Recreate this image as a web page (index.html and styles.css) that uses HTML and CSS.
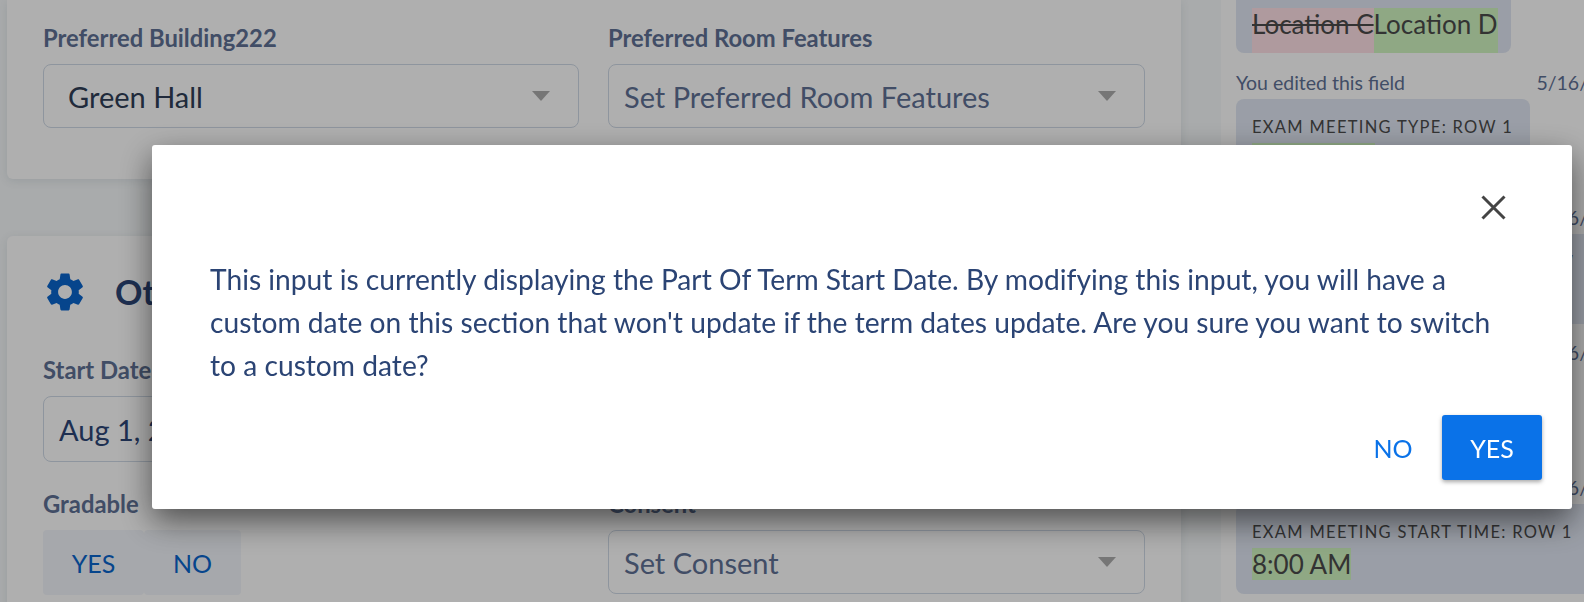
FILE: index.html
```html
<!DOCTYPE html>
<html lang="en">
<head>
  <meta name="viewport" content="width=device-width, initial-scale=1">
  <link rel="stylesheet" href="styles.css">
</head>
<body>
  <div class="page">
    <main class="main-col">
      <section class="card card-first">
        <div class="form-row">
          <div class="field">
            <div class="field-label">Preferred Building222</div>
            <div class="select select-filled">Green Hall<span class="caret"></span></div>
          </div>
          <div class="field">
            <div class="field-label">Preferred Room Features</div>
            <div class="select">Set Preferred Room Features<span class="caret"></span></div>
          </div>
        </div>
      </section>

      <section class="card card-second">
        <div class="card-title">
          <svg class="gear" viewBox="0 0 24 24"><path d="M19.14 12.94c.04-.3.06-.61.06-.94 0-.32-.02-.64-.07-.94l2.03-1.58c.18-.14.23-.41.12-.61l-1.92-3.32c-.12-.22-.37-.29-.59-.22l-2.39.96c-.5-.38-1.03-.7-1.62-.94l-.36-2.54c-.04-.24-.24-.41-.48-.41h-3.84c-.24 0-.43.17-.47.41l-.36 2.54c-.59.24-1.13.57-1.62.94l-2.39-.96c-.22-.08-.47 0-.59.22L2.74 8.87c-.12.21-.08.47.12.61l2.03 1.58c-.05.3-.09.63-.09.94s.02.64.07.94l-2.03 1.58c-.18.14-.23.41-.12.61l1.92 3.32c.12.22.37.29.59.22l2.39-.96c.5.38 1.03.7 1.62.94l.36 2.54c.05.24.24.41.48.41h3.84c.24 0 .44-.17.47-.41l.36-2.54c.59-.24 1.13-.56 1.62-.94l2.39.96c.22.08.47 0 .59-.22l1.92-3.32c.12-.22.07-.47-.12-.61l-2.01-1.58zM12 15.6c-1.98 0-3.6-1.62-3.6-3.6s1.62-3.6 3.6-3.6 3.6 1.62 3.6 3.6-1.62 3.6-3.6 3.6z"/></svg>
          <h2>Other Settings</h2>
        </div>
        <div class="form-row">
          <div class="field">
            <div class="field-label">Start Date</div>
            <div class="select date-input">Aug 1, 2022</div>
          </div>
        </div>
        <div class="form-row form-row-last">
          <div class="field">
            <div class="field-label">Gradable</div>
            <div class="toggle">
              <span class="toggle-btn">YES</span>
              <span class="toggle-btn">NO</span>
            </div>
          </div>
          <div class="field">
            <div class="field-label">Consent</div>
            <div class="select">Set Consent<span class="caret"></span></div>
          </div>
        </div>
      </section>
    </main>

    <aside class="history">
      <div class="change change-first">
        <div class="change-box change-box-short">
          <span class="removed">Location C</span><span class="added">Location D</span>
        </div>
      </div>
      <div class="change">
        <div class="change-meta"><span>You edited this field</span><span>5/16/</span></div>
        <div class="change-box change-box-type">
          <div class="change-label">EXAM MEETING TYPE: ROW 1</div>
          <span class="added">Final Exam</span>
        </div>
      </div>
      <div class="change">
        <div class="change-meta"><span>You edited this field</span><span>5/16/</span></div>
        <div class="change-box change-box-wide">
          <div class="change-label">EXAM MEETING DESCRIPTION: ROW</div>
          <span class="added">Location D</span>
        </div>
      </div>
      <div class="change">
        <div class="change-meta"><span>You edited this field</span><span>5/16/</span></div>
        <div class="change-box change-box-type">
          <div class="change-label">EXAM MEETING DATE: ROW 1</div>
          <span class="added">Aug 1, 2022</span>
        </div>
      </div>
      <div class="change">
        <div class="change-meta"><span>You edited this field</span><span>5/16/</span></div>
        <div class="change-box change-box-wide">
          <div class="change-label">EXAM MEETING START TIME: ROW 1</div>
          <span class="added">8:00 AM</span>
        </div>
      </div>
    </aside>
  </div>

  <div class="overlay"></div>

  <div class="modal">
    <div class="modal-top">
      <svg class="close" viewBox="0 0 25 25"><path d="M1.5 1.5l22 22M23.5 1.5l-22 22"/></svg>
    </div>
    <p class="modal-text">This input is currently displaying the Part Of Term Start Date. By modifying this input, you will have a custom date on this section that won't update if the term dates update. Are you sure you want to switch to a custom date?</p>
    <div class="modal-actions">
      <button class="btn-text">NO</button>
      <button class="btn-primary">YES</button>
    </div>
  </div>
</body>
</html>
```

FILE: styles.css
```css
:root {
  --page-bg: #f2f5f6;
  --navy: #2b4474;
  --label: #5d6f92;
  --blue: #0a72e8;
  --border: #ccd6e2;
}

* {
  box-sizing: border-box;
}

html, body {
  margin: 0;
  height: 602px;
  overflow: hidden;
}

body {
  font-family: Lato, sans-serif;
  background-color: var(--page-bg);
  color: var(--navy);
}

.page {
  display: grid;
  grid-template-columns: 1221px 363px;
  height: 602px;
  overflow: hidden;
}

.main-col {
  padding-left: 7px;
  padding-right: 40px;
}

.card {
  background-color: #fbfbfb;
  border-radius: 6px;
  padding: 0 36px;
  box-shadow: 0 2px 10px rgba(60, 80, 110, 0.12);
}

.card-first {
  height: 179px;
  padding-top: 25px;
  border-radius: 0 0 6px 6px;
}

.card-second {
  margin-top: 57px;
  height: 400px;
  padding-top: 36px;
}

.form-row {
  display: grid;
  grid-template-columns: 536px 537px;
  column-gap: 29px;
}

.form-row-last {
  margin-top: 29px;
}

.field-label {
  font-size: 23.8px;
  font-weight: 700;
  line-height: 26px;
  color: var(--label);
  margin-bottom: 13px;
}

.select {
  display: flex;
  align-items: center;
  justify-content: space-between;
  height: 64px;
  padding: 0 28px 0 15px;
  border: 1px solid var(--border);
  border-radius: 8px;
  font-size: 29px;
  white-space: nowrap;
  color: var(--label);
}

.select-filled {
  padding-left: 24px;
  color: #2e3d55;
}

.date-input {
  height: 66px;
  color: var(--navy);
}

.caret {
  width: 0;
  height: 0;
  border-left: 9px solid transparent;
  border-right: 9px solid transparent;
  border-top: 10px solid #aaa;
}

.card-title {
  display: flex;
  align-items: center;
  height: 38px;
  margin-bottom: 47px;
}

.gear {
  width: 46px;
  height: 46px;
  margin-left: -1px;
  margin-top: 2px;
  margin-right: 27px;
  fill: #0a63c9;
  flex: none;
}

.card-title h2 {
  margin: 0;
  font-size: 34px;
  font-weight: 700;
  white-space: nowrap;
  color: var(--navy);
}

.toggle {
  display: flex;
  width: 198px;
  height: 65px;
}

.toggle-btn {
  display: flex;
  align-items: center;
  justify-content: center;
  flex: 1;
  background-color: #eef1f6;
  border-radius: 4px;
  font-size: 25px;
  color: #0a63c9;
}

.toggle-btn:first-child {
  flex: 0 0 101px;
}

.history {
  padding-left: 15px;
  background-color: #fbfbfb;
  color: var(--navy);
}

.change {
  height: 135px;
}

.change-first {
  height: 70px;
}

.change-meta {
  display: flex;
  justify-content: space-between;
  height: 29px;
  width: 352px;
  font-size: 19.5px;
  line-height: 26px;
  white-space: nowrap;
  color: var(--label);
}

.change-box {
  height: 90px;
  padding: 16px 16px 0;
  background-color: #dde3ef;
  border-radius: 8px;
  width: 280px;
  color: #4a4a4a;
}

.change-box-short {
  display: flex;
  width: 275px;
  height: 53px;
  padding-top: 8px;
  border-radius: 0 0 8px 8px;
}

.change-box-type {
  width: 294px;
}

.change-box-wide {
  width: 360px;
}

.change-label {
  font-size: 16.5px;
  line-height: 24px;
  letter-spacing: 1.3px;
  margin-bottom: 4px;
  white-space: nowrap;
}

.removed, .added {
  display: inline-block;
  font-size: 26px;
  line-height: 32px;
  white-space: nowrap;
}

.removed {
  background-color: #fbdde2;
  text-decoration: line-through;
}

.added {
  background-color: #cdf1bd;
}

.overlay {
  position: fixed;
  inset: 0;
  background-color: rgba(0, 0, 0, 0.3);
}

.modal {
  position: fixed;
  left: 152px;
  top: 145px;
  width: 1420px;
  height: 364px;
  padding: 0 30px 0 58px;
  background-color: #fff;
  border-radius: 3px;
  box-shadow: 0 12px 32px rgba(0, 0, 0, 0.55);
}

.modal-top {
  display: flex;
  justify-content: flex-end;
  height: 113px;
  padding: 50px 36px 0 0;
}

.close {
  width: 25px;
  height: 25px;
  stroke: #444;
  stroke-width: 3;
  fill: none;
}

.modal-text {
  margin: 0;
  height: 157px;
  padding-right: 50px;
  font-size: 28.2px;
  line-height: 43px;
  color: var(--navy);
}

.modal-actions {
  display: flex;
  justify-content: flex-end;
  align-items: center;
  gap: 14px;
}

.modal-actions button {
  height: 65px;
  padding: 0;
  font-family: Lato, sans-serif;
  font-size: 25px;
  border: 0;
  border-radius: 3px;
}

.btn-text {
  width: 70px;
  background: none;
  color: var(--blue);
}

.btn-primary {
  width: 100px;
  background-color: var(--blue);
  color: #fff;
  box-shadow: 0 2px 4px rgba(0, 0, 0, 0.35);
}
```
